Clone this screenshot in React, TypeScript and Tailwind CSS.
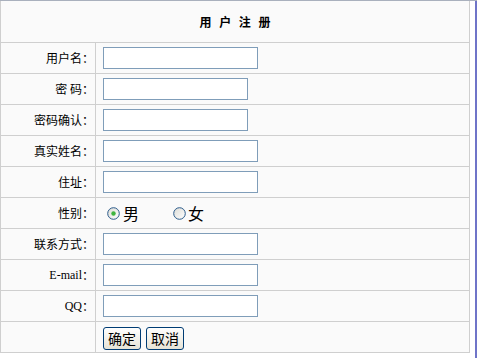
import React from 'react';

const cjk = { fontFamily: '"SimSun", "Noto Sans CJK SC", sans-serif' };

const Radio = ({ checked }: { checked?: boolean }) => (
    <svg width="13" height="13" viewBox="0 0 13 13" className="shrink-0">
        <defs>
            <linearGradient id={checked ? 'rg1' : 'rg2'} x1="0" y1="0" x2="1" y2="1">
                <stop offset="0" stopColor="#dcdcd6" />
                <stop offset="1" stopColor="#ffffff" />
            </linearGradient>
        </defs>
        <circle cx="6.5" cy="6.5" r="5.8" fill={`url(#${checked ? 'rg1' : 'rg2'})`} stroke="#2a5a8a" strokeWidth="1" />
        {checked && <circle cx="6.5" cy="6.5" r="2.2" fill="#3fb43f" />}
    </svg>
);

const Row = ({ label, children }: { label: React.ReactNode; children?: React.ReactNode }) => (
    <div className="flex h-[31px] border-b border-[#cfcfcf]">
        <div className="w-[95px] shrink-0 border-r border-[#cfcfcf] flex items-center justify-end pr-[1px] text-[12px] text-black" style={cjk}>
            {label}
        </div>
        <div className="flex-1 flex items-center pl-[7px]">{children}</div>
    </div>
);

const Field = ({ w = 'w-[155px]' }: { w?: string }) => (
    <input type="text" className={`${w} h-[22px] border border-[#7f9db9] bg-white outline-none`} />
);

const Btn = ({ children }: { children: React.ReactNode }) => (
    <button className="h-[23px] px-[4px] rounded-[3px] border border-[#003c74] bg-gradient-to-b from-white to-[#e6e3d6] text-[14px] leading-none text-black" style={cjk}>
        {children}
    </button>
);

export default function App() {
    return (
        <div className="w-[477px] h-[358px] flex bg-white border-t border-[#a9b0bd] overflow-hidden">
            <div className="w-[470px] shrink-0 border-l border-r border-[#cfcfcf] bg-[#fafafa] self-start">
                <div className="h-[42px] border-b border-[#cfcfcf] flex items-center justify-center text-[12px] font-bold tracking-[2.5px] pl-[2.5px]" style={cjk}>
                    用 户 注 册
                </div>
                <Row label="用户名："><Field /></Row>
                <Row label="密 码："><Field w="w-[145px]" /></Row>
                <Row label="密码确认："><Field w="w-[145px]" /></Row>
                <Row label="真实姓名："><Field /></Row>
                <Row label="住址："><Field /></Row>
                <Row label="性别：">
                    <div className="flex items-center pl-[4px] text-[16px] leading-none" style={cjk}>
                        <Radio checked />
                        <span className="ml-[3px]">男</span>
                        <span className="ml-[34px]"><Radio /></span>
                        <span className="ml-[2px]">女</span>
                    </div>
                </Row>
                <Row label="联系方式："><Field /></Row>
                <Row label={<><span style={{ fontFamily: '"Liberation Serif", serif' }}>E-mail</span>：</>}><Field /></Row>
                <Row label={<><span style={{ fontFamily: '"Liberation Serif", serif' }}>QQ</span>：</>}><Field /></Row>
                <Row label="">
                    <div className="flex gap-[5px] pt-[2px]">
                        <Btn>确定</Btn>
                        <Btn>取消</Btn>
                    </div>
                </Row>
            </div>
            <div className="w-[5px] shrink-0" />
            <div className="w-[2px] h-full bg-[#6f74c8]" />
        </div>
    );
}
